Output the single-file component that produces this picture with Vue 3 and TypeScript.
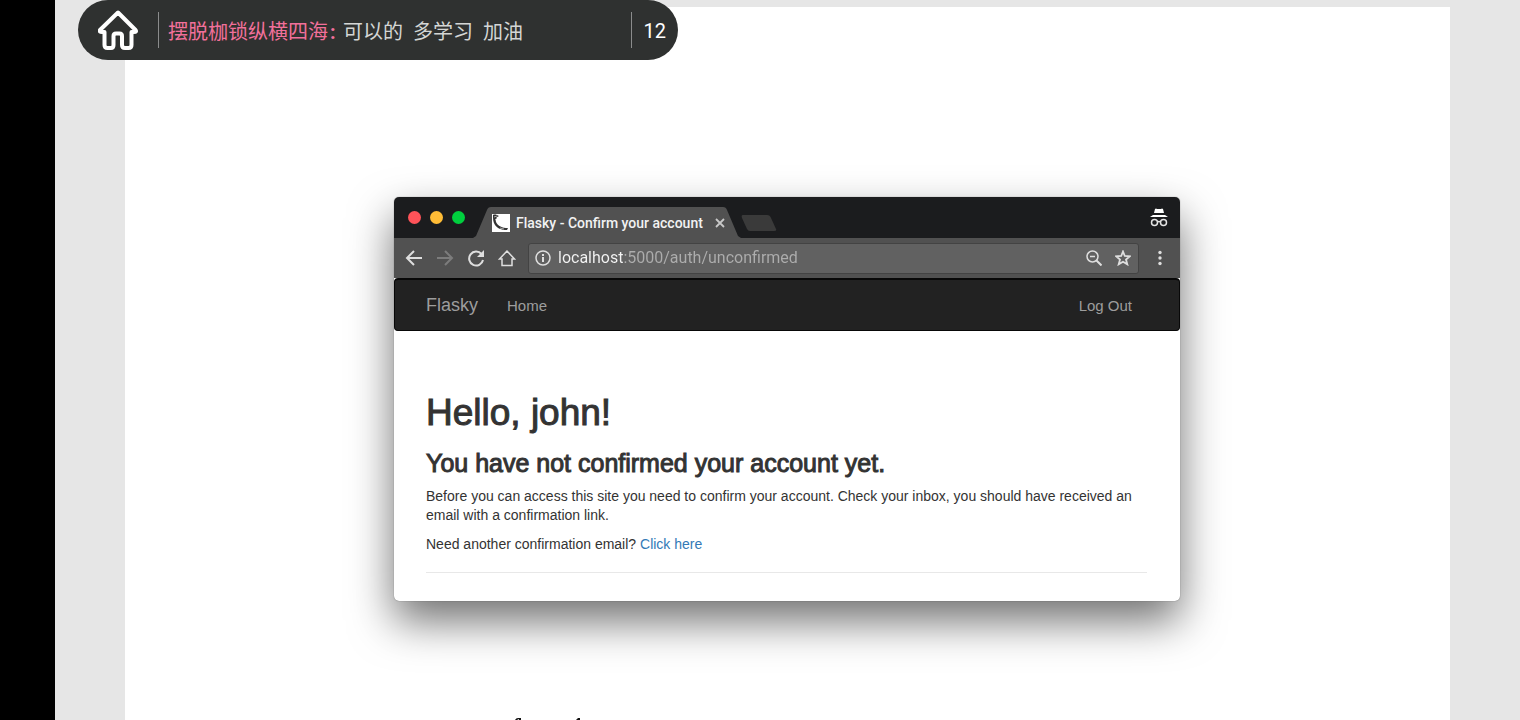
<script setup lang="ts">
import { ref } from 'vue'

interface Message {
  author: string
  parts: string[]
}

const message: Message = { author: '摆脱枷锁纵横四海', parts: ['可以的', '多学习', '加油'] }
const unread = 12
const address = ref('localhost:5000/auth/unconfirmed')
const lights = ['close', 'minimise', 'zoom']
</script>

<template>
  <div class="stage">
    <div class="edge"></div>
    <div class="desk">
      <main class="sheet">
        <section class="browser">
          <header class="titlebar">
            <div class="lights">
              <button v-for="l in lights" :key="l" type="button" :class="['light', l]" :aria-label="l"></button>
            </div>
            <div class="tab">
              <svg class="tab-shape" viewBox="0 0 268 31" preserveAspectRatio="none" aria-hidden="true">
                <path d="M0 31 L3 29 L14 3 Q15 0 18 0 H250 Q253 0 254 3 L265 29 L268 31Z" fill="#515151" />
              </svg>
              <svg class="favicon" viewBox="0 0 18 18" aria-hidden="true">
                <rect width="18" height="18" fill="#fff" />
                <path d="M1 1 C3 0 5 1 7 2 C4 3 3 5 4 8 C6 12 10 14 16 14 L15 16 C9 16 5 14 3 11 C1 8 1 5 1 1Z" fill="#333" />
                <path d="M2 3 L5 2 M3 6 L5 4 M8 14 L12 15" stroke="#aaa" stroke-width="1" />
              </svg>
              <span class="tab-title">Flasky - Confirm your account</span>
              <button type="button" class="tab-close" aria-label="Close tab">
                <svg viewBox="0 0 10 10" width="10" height="10"><path d="M1 1 L9 9 M9 1 L1 9" stroke="#c8c8c8" stroke-width="1.800" /></svg>
              </button>
            </div>
            <button type="button" class="new-tab" aria-label="New tab">
              <svg viewBox="0 0 36 17" width="36" height="17"><path d="M2 0 H26 Q29 0 30 3 L35 14 Q36 16 33 16 H9 Q7 16 6 14 L1 3 Q0 0 2 0Z" fill="#3a3a3a" /></svg>
            </button>
            <svg class="incognito" viewBox="0 0 18 19" aria-hidden="true">
              <path d="M5 1 Q6 0 7 1 H11 Q12 0 13 1 L14 5 H4Z" fill="#fff" />
              <path d="M3 7 H15 L18 9 H0Z" fill="#fff" />
              <g fill="none" stroke="#e4e4e4" stroke-width="1.5">
                <circle cx="4.5" cy="14.5" r="3" /><circle cx="13.5" cy="14.5" r="3" /><path d="M7.5 14 Q9 13 10.5 14" />
              </g>
            </svg>
          </header>

          <div class="toolbar">
            <button type="button" class="tool" aria-label="Back">
              <svg viewBox="0 0 18 18"><path d="M17 9 H2 M9 2 L2 9 L9 16" class="line" /></svg>
            </button>
            <button type="button" class="tool dim" aria-label="Forward">
              <svg viewBox="0 0 18 18"><path d="M1 9 H16 M9 2 L16 9 L9 16" class="line" /></svg>
            </button>
            <button type="button" class="tool" aria-label="Reload">
              <svg viewBox="0 0 18 18"><path d="M14.500 5 A7 7 0 1 0 16 11" class="line" /><path d="M17 1 V8 H10Z" fill="#dedede" /></svg>
            </button>
            <button type="button" class="tool" aria-label="Home page">
              <svg viewBox="0 0 18 18"><path d="M9 2 L1.500 10 H4 V16.500 H14 V10 H16.500Z" class="line thin" /></svg>
            </button>
            <div class="omnibox">
              <svg class="info" viewBox="0 0 16 16" aria-hidden="true">
                <circle cx="8" cy="8" r="7" class="line thin" /><path d="M8 7 V12 M8 4 V6" class="line" />
              </svg>
              <input v-model="address" class="address" type="text" aria-label="Address" spellcheck="false" />
              <button type="button" class="inner" aria-label="Zoom out">
                <svg viewBox="0 0 16 16"><circle cx="6.500" cy="6.500" r="5.500" class="line thin" /><path d="M4 6.500 H9" class="line thin" /><path d="M10.500 10.500 L15.500 15.500" class="line" /></svg>
              </button>
              <button type="button" class="inner" aria-label="Bookmark">
                <svg viewBox="0 0 16 16"><path d="M8 1.500 L9.800 6 L14.800 6.300 L11 9.500 L12.300 14.300 L8 11.700 L3.700 14.300 L5 9.500 L1.200 6.300 L6.200 6Z" class="line star" /></svg>
              </button>
            </div>
            <button type="button" class="more" aria-label="Menu">
              <svg viewBox="0 0 4 16" width="4" height="16"><circle cx="2" cy="2.500" r="1.700" /><circle cx="2" cy="8" r="1.700" /><circle cx="2" cy="13.500" r="1.700" /></svg>
            </button>
          </div>

          <nav class="navbar">
            <a href="#" class="brand">Flasky</a>
            <a href="#" class="nav-link">Home</a>
            <a href="#" class="nav-link last">Log Out</a>
          </nav>

          <article class="content">
            <h1>Hello, john!</h1>
            <h3>You have not confirmed your account yet.</h3>
            <p>Before you can access this site you need to confirm your account. Check your inbox, you should have received an email with a confirmation link.</p>
            <p>Need another confirmation email? <a href="#">Click here</a></p>
            <hr />
          </article>
        </section>
        <svg class="marks" viewBox="0 0 66 2" width="66" height="2" aria-hidden="true">
          <path d="M0 2 Q1 0 3 0 H6 V2 H4 V1 L2 2Z M61 2 L63 0 H65 V2Z" fill="#111" />
        </svg>
      </main>
    </div>

    <aside class="pill">
      <button type="button" class="home" aria-label="Home">
        <svg viewBox="0 0 40 40" width="40" height="40">
          <path d="M20 2.500 L2 20 Q1 22 4 22 H6.500 V35 Q6.500 38 9.500 38 H13 Q15.500 38 15.500 35 V26 Q15.500 23.500 18 23.500 H21.500 Q24 23.500 24 26 V35 Q24 38 27 38 H30.500 Q33.500 38 33.500 35 V22 H36 Q39 22 37.500 20 Z" fill="none" stroke="#fff" stroke-width="4" stroke-linejoin="round" />
        </svg>
      </button>
      <p class="message">
        <span class="author">{{ message.author }}</span><span class="colon">:</span>
        <span class="said"><span v-for="part in message.parts" :key="part">{{ part }}</span></span>
      </p>
      <span class="count">{{ unread }}</span>
    </aside>
  </div>
</template>

<style>
body {
  margin: 0;
}
</style>

<style scoped>
* {
  box-sizing: border-box;
}
button {
  padding: 0;
  border: 0;
  background: none;
  display: grid;
  place-items: center;
}
svg {
  display: block;
}
.stage {
  position: relative;
  display: flex;
  height: 100vh;
  overflow: hidden;
  font-family: "Liberation Sans", Arial, sans-serif;
}
.edge {
  flex: 0 0 55px;
  background: #000;
}
.desk {
  flex: 1;
  display: flex;
  padding: 7px 70px 0;
  background: #e6e6e6;
}
.sheet {
  flex: 1;
  display: flex;
  flex-direction: column;
  align-items: center;
  padding: 190px 25px 0 24px;
  background: #fff;
}
.browser {
  width: 100%;
  max-width: 786px;
  border-radius: 5px;
  background: #fff;
  box-shadow: 0 0 1px rgba(0, 0, 0, 0.6), 0 20px 44px rgba(0, 0, 0, 0.56);
}
.titlebar {
  display: flex;
  height: 41px;
  padding: 0 12px 0 14px;
  border-radius: 5px 5px 0 0;
  background: #1b1c1e;
}
.lights {
  display: flex;
  align-items: center;
  gap: 9px;
  margin-right: 8px;
}
.light {
  width: 13px;
  height: 13px;
  border-radius: 50%;
}
.close {
  background: #ff5359;
}
.minimise {
  background: #ffbc36;
}
.zoom {
  background: #00cf3e;
}
.tab {
  position: relative;
  display: flex;
  align-items: center;
  align-self: flex-end;
  width: 268px;
  height: 31px;
  padding-left: 19px;
}
.tab-shape {
  position: absolute;
  inset: 0;
  width: 100%;
  height: 100%;
}
.favicon,
.tab-title,
.tab-close {
  position: relative;
}
.favicon {
  width: 18px;
  height: 18px;
  margin-right: 6px;
}
.tab-title {
  width: 190px;
  margin-right: 9px;
  white-space: nowrap;
  font: 500 14px/18px Roboto, sans-serif;
  color: #f2f2f2;
}
.new-tab {
  align-self: center;
  margin-top: 12px;
}
.incognito {
  width: 18px;
  height: 19px;
  align-self: center;
  margin-left: auto;
}
.toolbar {
  display: flex;
  align-items: center;
  height: 40px;
  padding: 0 18px 0 11px;
  background: #515151;
}
.tool {
  width: 18px;
  height: 18px;
  margin-right: 13px;
}
.tool svg {
  width: 18px;
  height: 18px;
}
.line {
  fill: none;
  stroke: #dedede;
  stroke-width: 2;
}
.thin {
  stroke-width: 1.5;
}
.star {
  stroke-width: 1.8;
}
.dim .line {
  stroke: #7c7c7c;
}
.omnibox {
  flex: 1;
  display: flex;
  align-items: center;
  height: 31px;
  margin-left: -1px;
  padding: 0 7px 0 6px;
  border: 1px solid #434343;
  border-radius: 3px;
  background: #616161;
}
.info {
  width: 16px;
  height: 16px;
  margin-right: 7px;
}
.address {
  flex: 1;
  min-width: 0;
  padding: 0;
  border: 0;
  outline: 0;
  font: 16px/20px Roboto, sans-serif;
  color: transparent;
  background: linear-gradient(90deg, #f4f4f4 66px, #adadad 66px);
  background-clip: text;
  -webkit-background-clip: text;
}
.inner {
  width: 16px;
  height: 16px;
  margin-left: 13px;
}
.inner svg {
  width: 16px;
  height: 16px;
}
.more {
  margin-left: 19px;
  fill: #dedede;
}
.navbar {
  display: flex;
  align-items: center;
  height: 53px;
  padding: 0 47px 0 31px;
  border: 1px solid #080808;
  border-top-width: 2px;
  border-radius: 4px;
  background: #222;
}
.navbar a {
  color: #9d9d9d;
  text-decoration: none;
}
.brand {
  margin-right: 29px;
  font-size: 18px;
}
.nav-link {
  font-size: 15px;
}
.last {
  margin-left: auto;
}
.content {
  padding: 61px 33px 28px 32px;
  color: #333;
}
h1,
h3 {
  margin: 0;
  font-weight: 400;
  -webkit-text-stroke: 1px #333;
}
h1 {
  font-size: 37px;
  line-height: 42px;
}
h3 {
  margin-top: 15px;
  font-size: 25px;
  line-height: 28px;
}
.content p {
  margin: 10px 0;
  font-size: 14px;
  line-height: 19px;
}
.content a {
  color: #337ab7;
  text-decoration: none;
}
hr {
  height: 1px;
  margin: 18px 0 0;
  border: 0;
  background: #e8e8e8;
}
.marks {
  flex: none;
  margin: 117px 0 0 -478px;
}
.pill {
  position: absolute;
  top: 0;
  left: 78px;
  display: flex;
  align-items: center;
  width: 600px;
  height: 60px;
  padding: 0 12px 0 20px;
  border-radius: 30px;
  background: #2f3130;
  font: 20px/30px Roboto, "Noto Sans CJK SC", sans-serif;
}
.home {
  margin-right: 20px;
}
.message {
  flex: 1;
  display: flex;
  align-items: center;
  height: 36px;
  margin: 0;
  padding: 3px 0 0 9px;
  border-left: 1px solid #8b8c8c;
  border-right: 1px solid #8b8c8c;
  color: #d4d6d5;
}
.author,
.colon {
  color: #f2709a;
}
.colon {
  width: 15px;
  padding-left: 2px;
  font-weight: 700;
}
.said {
  display: flex;
  gap: 10px;
}
.count {
  margin-left: 12px;
  padding-top: 2px;
  color: #fff;
}
</style>
